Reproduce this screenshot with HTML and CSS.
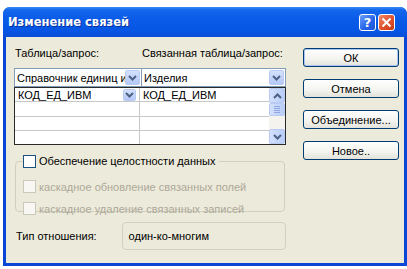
FILE: index.html
```html
<!DOCTYPE html>
<html lang='ru'>
<head>
    <meta charset='UTF-8' />
    <title>Изменение связей</title>
    <link rel="stylesheet" href="styles.css">
</head>
<body>
    <div class='window'>
        <div class='titlebar'>
            <span class='title'>Изменение связей</span>
            <span class='tb-btn help'>?</span>
            <span class='tb-btn close'>
                <svg width='11' height='11' viewBox='0 0 11 11'><path d='M1.5 1.5 L9.5 9.5 M9.5 1.5 L1.5 9.5' stroke='#fff' stroke-width='2'/></svg>
            </span>
        </div>

        <div class='client'>
            <div class='left'>
                <div class='cols labels'>
                    <span>Таблица/запрос:</span>
                    <span class='pad'>Связанная таблица/запрос:</span>
                </div>

                <div class='cols combos'>
                    <div class='combo'>
                        <span class='combo-text'>Справочник единиц и</span>
                        <span class='drop'><svg width='9' height='6' viewBox='0 0 9 6'><path d='M1 1 L4.5 4.5 L8 1' fill='none' stroke='#4d6185' stroke-width='2'/></svg></span>
                    </div>
                    <div class='combo'>
                        <span class='combo-text'>Изделия</span>
                        <span class='drop'><svg width='9' height='6' viewBox='0 0 9 6'><path d='M1 1 L4.5 4.5 L8 1' fill='none' stroke='#4d6185' stroke-width='2'/></svg></span>
                    </div>
                </div>

                <div class='grid'>
                    <div class='rows'>
                        <div class='row'>
                            <div class='cell first'>
                                <span>КОД_ЕД_ИВМ</span>
                                <span class='drop small'><svg width='9' height='6' viewBox='0 0 9 6'><path d='M1 1 L4.5 4.5 L8 1' fill='none' stroke='#4d6185' stroke-width='2'/></svg></span>
                            </div>
                            <div class='cell'>КОД_ЕД_ИВМ</div>
                        </div>
                        <div class='row'><div class='cell first'></div><div class='cell'></div></div>
                        <div class='row'><div class='cell first'></div><div class='cell'></div></div>
                        <div class='row last'><div class='cell first'></div><div class='cell'></div></div>
                    </div>
                    <div class='scrollbar'>
                        <span class='sb-btn'><svg width='9' height='6' viewBox='0 0 9 6'><path d='M1 5 L4.5 1.5 L8 5' fill='none' stroke='#4d6185' stroke-width='2'/></svg></span>
                        <span class='sb-thumb'><i></i><i></i><i></i><i></i></span>
                        <span class='sb-track'></span>
                        <span class='sb-btn'><svg width='9' height='6' viewBox='0 0 9 6'><path d='M1 1 L4.5 4.5 L8 1' fill='none' stroke='#4d6185' stroke-width='2'/></svg></span>
                    </div>
                </div>

                <fieldset class='group'>
                    <legend><span class='check'></span>Обеспечение целостности данных</legend>
                    <div class='opt'><span class='check off'></span>каскадное обновление связанных полей</div>
                    <div class='opt'><span class='check off'></span>каскадное удаление связанных записей</div>
                </fieldset>

                <div class='relation'>
                    <span class='rel-label'>Тип отношения:</span>
                    <span class='rel-box'>один-ко-многим</span>
                </div>
            </div>

            <div class='buttons'>
                <button class='default'>ОК</button>
                <button>Отмена</button>
                <button>Объединение...</button>
                <button>Новое..</button>
            </div>
        </div>
    </div>
</body>
</html>
```

FILE: styles.css
```css
:root {
    --face: #eceada;
    --xp-blue: #0a52e6;
    --border-blue: #0b47d6;
    --combo-border: #7f9db9;
    --disabled: #aca899;
}
body {
    margin: 0;
    background: #fff;
    font-family: 'Liberation Sans', Arial, sans-serif;
    font-size: 11px;
    color: #000;
}
.window {
    margin: 7px 0 0 3px;
    height: 259px;
    display: flex;
    flex-direction: column;
    border-radius: 7px 7px 0 0;
    background: var(--border-blue);
    overflow: hidden;
}
.titlebar {
    height: 30px;
    flex: none;
    display: flex;
    align-items: center;
    padding: 0 12px 0 5px;
    background: linear-gradient(#3b8cf5 0, #1466ec 3px, #0a5be8 12px, #0655e4 24px, #0a4ed6 30px);
}
.title {
    flex: 1;
    color: #fff;
    font-family: 'DejaVu Sans', sans-serif;
    font-weight: bold;
    font-size: 11.5px;
    text-shadow: 1px 1px 0 #0a2f9c;
}
.tb-btn {
    width: 15px;
    height: 15px;
    margin-left: 2px;
    border: 1px solid #fff;
    border-radius: 3px;
    display: flex;
    align-items: center;
    justify-content: center;
    color: #fff;
    font-family: 'DejaVu Sans', sans-serif;
    font-weight: bold;
    font-size: 13px;
}
.help {
    background: linear-gradient(135deg, #6d9ef8, #2563e8 60%, #1f55d6);
}
.close {
    background: linear-gradient(135deg, #f08a6a, #e1502a 55%, #c43b18);
}
.client {
    flex: 1;
    margin: 0 3px 3px 3px;
    background: var(--face);
    display: flex;
}
.left {
    width: 272px;
    padding-left: 8px;
    display: flex;
    flex-direction: column;
}
.cols {
    display: grid;
    grid-template-columns: 128px 144px;
}
.labels {
    margin-top: 10px;
    height: 13px;
    line-height: 13px;
}
.labels span {
    padding-left: 1px;
}
.labels .pad {
    padding-left: 0;
}
.combos {
    margin-top: 8px;
    height: 19px;
}
.combo {
    background: #fff;
    border: 1px solid var(--combo-border);
    display: flex;
    align-items: center;
    padding: 1px;
    overflow: hidden;
}
.combo + .combo {
    border-left: none;
}
.combo-text {
    flex: 1;
    padding-left: 1px;
    white-space: nowrap;
    overflow: hidden;
}
.drop {
    width: 15px;
    height: 15px;
    flex: none;
    border: 1px solid #b9cbf3;
    border-radius: 2px;
    background: linear-gradient(#d4e0fc, #b5c9f7);
    box-sizing: border-box;
    display: flex;
    align-items: center;
    justify-content: center;
}
.drop.small {
    width: 13px;
    height: 12px;
    margin-right: 3px;
}
.grid {
    height: 58px;
    border: 1px solid #2a2a2a;
    background: #fff;
    display: flex;
    box-sizing: border-box;
}
.rows {
    flex: 1;
    display: flex;
    flex-direction: column;
}
.row {
    flex: 1;
    display: grid;
    grid-template-columns: 125px 1fr;
    border-bottom: 1px solid #c8c8c8;
}
.row.last {
    border-bottom: none;
}
.cell {
    display: flex;
    align-items: center;
    padding-left: 3px;
}
.cell.first {
    border-right: 1px solid #c8c8c8;
    justify-content: space-between;
}
.scrollbar {
    width: 16px;
    display: flex;
    flex-direction: column;
    background: #f4f3ee;
}
.sb-btn, .sb-thumb {
    height: 15px;
    flex: none;
    border: 1px solid #b9cbf3;
    border-radius: 2px;
    background: linear-gradient(90deg, #d4e0fc, #b9cdf8);
    box-sizing: border-box;
    display: flex;
    align-items: center;
    justify-content: center;
}
.sb-thumb {
    height: 13px;
    flex-direction: column;
    gap: 1px;
}
.sb-thumb i {
    width: 6px;
    height: 1px;
    background: #8fa8e0;
}
.sb-track {
    flex: 1;
}
.group {
    margin: 10px 0 0 1px;
    padding: 4px 0 0 7px;
    width: 270px;
    height: 57px;
    box-sizing: border-box;
    border: 1px solid #d0d0bf;
    border-radius: 4px;
}
.group legend {
    padding: 0 4px 0 0;
    margin-left: 0;
    display: flex;
    align-items: center;
    line-height: 13px;
}
.check {
    width: 11px;
    height: 11px;
    border: 1px solid #1c5180;
    background: #fff;
    margin-right: 3px;
    flex: none;
}
.check.off {
    border-color: #cac8bb;
    background: #f8f7f3;
}
.opt {
    display: flex;
    align-items: center;
    height: 13px;
    margin-top: 8px;
    color: var(--disabled);
}
.opt + .opt {
    margin-top: 9px;
}
.relation {
    margin-top: 10px;
    display: flex;
    align-items: center;
}
.rel-label {
    width: 106px;
    padding-left: 2px;
}
.rel-box {
    width: 157px;
    height: 26px;
    line-height: 26px;
    padding-left: 6px;
    border: 1px solid #d0d0bf;
    border-radius: 4px;
}
.buttons {
    margin: 11px 0 0 17px;
    display: flex;
    flex-direction: column;
    gap: 12px;
}
button {
    width: 96px;
    height: 19px;
    padding: 0;
    font-family: 'Liberation Sans', Arial, sans-serif;
    font-size: 11px;
    color: #000;
    border: 1px solid #003c74;
    border-radius: 3px;
    background: linear-gradient(#ffffff, #f3f3ef 60%, #e3e2da);
}
button.default {
    box-shadow: inset 0 0 0 1px #a9c4f5;
}
```
